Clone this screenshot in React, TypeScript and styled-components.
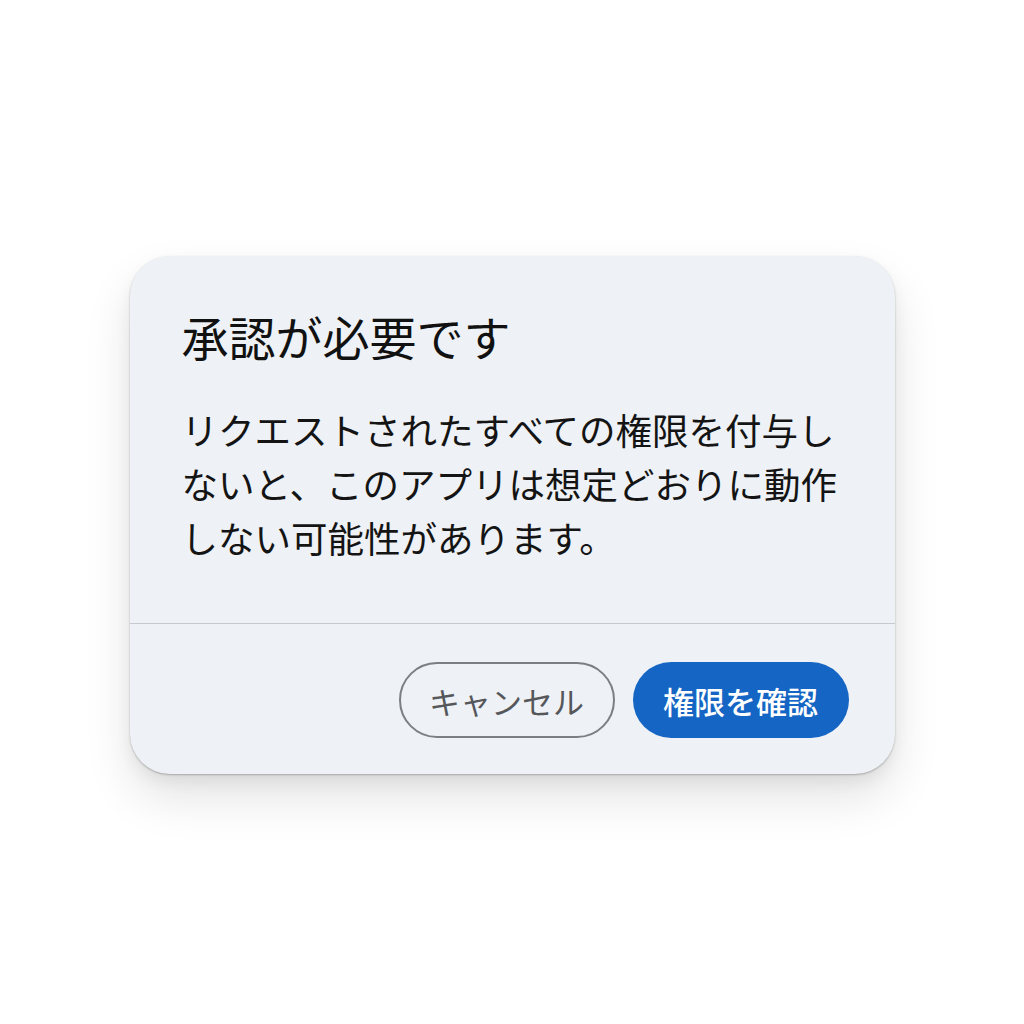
import styled, { createGlobalStyle } from "styled-components";

const GlobalStyle = createGlobalStyle`
  body {
    margin: 0;
    background: #ffffff;
    font-family: "Noto Sans CJK JP", "Noto Sans", sans-serif;
  }
`;

const Page = styled.div`
  min-height: 100vh;
  box-sizing: border-box;
  padding-top: 6px;
  display: flex;
  align-items: center;
  justify-content: center;
`;

const Dialog = styled.div`
  width: 765px;
  background-color: #eef1f5;
  border-radius: 40px;
  box-shadow: 0 1px 2px rgba(0, 0, 0, 0.25), 0 24px 48px rgba(0, 0, 0, 0.11),
    0 8px 16px rgba(0, 0, 0, 0.06);
  display: flex;
  flex-direction: column;
`;

const Content = styled.div`
  padding: 52px 40px 58px 52px;
`;

const Title = styled.h2`
  margin: 0 0 39px;
  font-size: 47px;
  line-height: 56px;
  font-weight: 400;
  color: #111111;
`;

const Message = styled.p`
  margin: 0;
  font-size: 36.5px;
  line-height: 54px;
  font-weight: 400;
  color: #141414;
`;

const Divider = styled.div`
  height: 1px;
  background-color: #c6cad0;
`;

const Footer = styled.div`
  display: flex;
  justify-content: flex-end;
  gap: 18px;
  padding: 38px 46px 36px;
`;

const Button = styled.button<{ $primary?: boolean }>`
  height: 76px;
  width: 216px;
  border-radius: 38px;
  font-family: inherit;
  font-size: 31px;
  font-weight: ${(p) => (p.$primary ? 500 : 400)};
  display: flex;
  align-items: center;
  justify-content: center;
  border: ${(p) => (p.$primary ? "none" : "2.5px solid #7c7e82")};
  background-color: ${(p) => (p.$primary ? "#1565c4" : "transparent")};
  color: ${(p) => (p.$primary ? "#ffffff" : "#55575b")};
`;

const App = () => {
  return (
    <>
      <GlobalStyle />
      <Page>
        <Dialog>
          <Content>
            <Title>承認が必要です</Title>
            <Message>
              リクエストされたすべての権限を付与しないと、このアプリは想定どおりに動作しない可能性があります。
            </Message>
          </Content>
          <Divider />
          <Footer>
            <Button>キャンセル</Button>
            <Button $primary>権限を確認</Button>
          </Footer>
        </Dialog>
      </Page>
    </>
  );
};

export default App;
